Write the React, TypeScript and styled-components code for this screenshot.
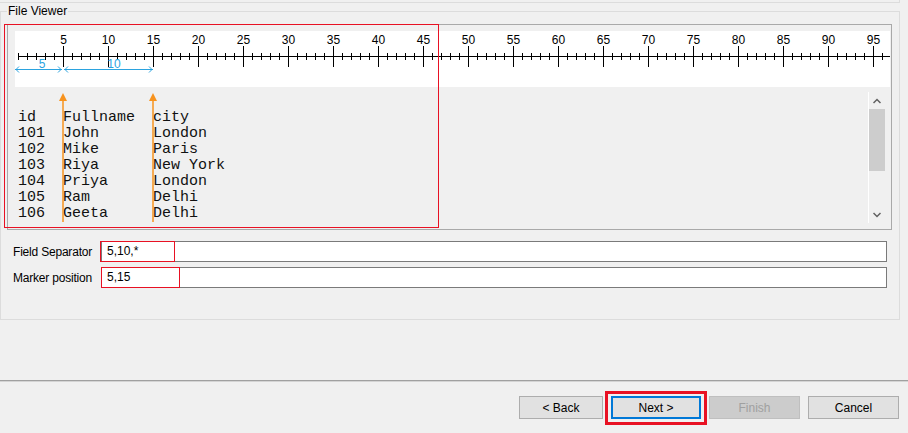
import React from "react";
import styled, { createGlobalStyle } from "styled-components";

const rows = [
  ["id", "Fullname", "city"],
  ["101", "John", "London"],
  ["102", "Mike", "Paris"],
  ["103", "Riya", "New York"],
  ["104", "Priya", "London"],
  ["105", "Ram", "Delhi"],
  ["106", "Geeta", "Delhi"],
];

// char width of the monospace view
const CH = 9;
const markers = [5, 15];

export default function App() {
  const ticks = Array.from({ length: 97 }, (_, k) => k);

  return (
    <Page>
      <GlobalStyle />
      <TopPanel />
      <Group>
        <Legend>File Viewer</Legend>
        <Viewer>
          <RulerWrap>
            <svg width="875" height="56" shapeRendering="crispEdges">
              <line x1="3" y1="25.5" x2="875" y2="25.5" stroke="#000" />
              {ticks.map((k) => {
                const x = 3.5 + CH * k;
                const major = k % 5 === 0 && k > 0;
                return (
                  <g key={k}>
                    <line
                      x1={x}
                      x2={x}
                      y1={major ? 15 : 22}
                      y2={major ? 36 : 29}
                      stroke="#000"
                      strokeWidth={major ? 1.4 : 1}
                    />
                    {major && (
                      <text
                        x={x}
                        y="13"
                        textAnchor="middle"
                        fontSize="12"
                        fontFamily="'Liberation Sans', Arial, sans-serif"
                        fill="#000"
                        shapeRendering="auto"
                      >
                        {k}
                      </text>
                    )}
                  </g>
                );
              })}
              <g stroke="#2ba3df" fill="none" shapeRendering="auto">
                <line x1="0" y1="38.5" x2="47" y2="38.5" />
                <polyline points="4,35.5 1,38.5 4,41.5" />
                <polyline points="43,35.5 46,38.5 43,41.5" />
                <line x1="49" y1="38.5" x2="138" y2="38.5" />
                <polyline points="53,35.5 50,38.5 53,41.5" />
                <polyline points="134,35.5 137,38.5 134,41.5" />
              </g>
              <g
                fill="#2ba3df"
                fontSize="12"
                fontFamily="'Liberation Sans', Arial, sans-serif"
                textAnchor="middle"
                shapeRendering="auto"
              >
                <text x="27" y="37">5</text>
                <text x="99" y="37">10</text>
              </g>
            </svg>
          </RulerWrap>
          <DataArea>
            <TextPane>
              {rows.map((r, i) => (
                <DataRow key={i}>
                  {r.map((c, j) => (
                    <span key={j}>{c}</span>
                  ))}
                </DataRow>
              ))}
              <MarkerLayer width="200" height="142">
                {markers.map((m) => {
                  const x = 10 + CH * m;
                  return (
                    <g key={m} fill="#f7931e" stroke="#f7931e">
                      <polygon points={`${x},6 ${x + 4},14 ${x - 4},14`} stroke="none" />
                      <line x1={x} y1="13" x2={x} y2="135" strokeWidth="1.5" />
                    </g>
                  );
                })}
              </MarkerLayer>
            </TextPane>
            <Scrollbar>
              <ScrollButton>
                <svg width="8" height="6">
                  <polyline points="0.5,5 4,1.5 7.5,5" fill="none" stroke="#606060" strokeWidth="1.5" />
                </svg>
              </ScrollButton>
              <Thumb />
              <Track />
              <ScrollButton>
                <svg width="8" height="6">
                  <polyline points="0.5,1 4,4.5 7.5,1" fill="none" stroke="#606060" strokeWidth="1.5" />
                </svg>
              </ScrollButton>
            </Scrollbar>
          </DataArea>
          <Highlight $left={-4} $top={-1} $width={435} $height={204} />
        </Viewer>
        <Fields>
          <FieldRow>
            <Label>Field Separator</Label>
            <InputWrap>
              <Input>5,10,*</Input>
              <Highlight $left={-1} $top={0} $width={75} $height={21} />
            </InputWrap>
          </FieldRow>
          <FieldRow>
            <Label>Marker position</Label>
            <InputWrap>
              <Input>5,15</Input>
              <Highlight $left={0} $top={0} $width={79} $height={21} />
            </InputWrap>
          </FieldRow>
        </Fields>
      </Group>
      <Footer>
        <Button $width={84}>&lt; Back</Button>
        <FocusWrap>
          <Button $width={90} $focused>
            Next &gt;
          </Button>
          <FocusMark />
        </FocusWrap>
        <Button $width={91} $disabled>
          Finish
        </Button>
        <Button $width={91}>Cancel</Button>
      </Footer>
    </Page>
  );
}

const GlobalStyle = createGlobalStyle`
  html, body {
    margin: 0;
    padding: 0;
    background: #f0f0f0;
  }
  * {
    box-sizing: border-box;
  }
`;

const Page = styled.div`
  width: 908px;
  height: 433px;
  display: flex;
  flex-direction: column;
  background: #f0f0f0;
  font-family: "Liberation Sans", Arial, sans-serif;
  font-size: 12px;
  color: #000;
  overflow: hidden;
`;

const TopPanel = styled.div`
  width: 900px;
  height: 3px;
  border-right: 1px solid #dcdcdc;
  border-bottom: 1px solid #dcdcdc;
  flex: none;
`;

const Group = styled.fieldset`
  width: 900px;
  margin: 1px 0 0 0;
  padding: 5px 7px 31px 6px;
  border: 1px solid #dcdcdc;
  min-width: 0;
  flex: none;
`;

const Legend = styled.legend`
  padding: 0 1px;
  font-size: 12px;
  line-height: 15px;
`;

const Viewer = styled.div`
  position: relative;
  height: 206px;
  border: 1px solid #a9a9a9;
  display: flex;
  flex-direction: column;
`;

const RulerWrap = styled.div`
  padding: 6px 1px 0 7px;
  height: 62px;
  & > svg {
    display: block;
    background: #fff;
  }
`;

const DataArea = styled.div`
  flex: 1;
  display: flex;
`;

const TextPane = styled.div`
  position: relative;
  flex: 1;
  padding: 23px 0 0 10px;
  font-family: "Liberation Mono", "Courier New", monospace;
  font-size: 15px;
  line-height: 16px;
  color: #111;
`;

const DataRow = styled.div`
  display: grid;
  grid-template-columns: 45px 90px auto;
  white-space: pre;
`;

const MarkerLayer = styled.svg`
  position: absolute;
  left: 0;
  top: 0;
`;

const Scrollbar = styled.div`
  width: 17px;
  height: 131px;
  margin: 5px 6px 0 0;
  border-left: 1px solid #fff;
  display: flex;
  flex-direction: column;
`;

const ScrollButton = styled.div`
  height: 17px;
  display: flex;
  align-items: center;
  justify-content: center;
  & > svg {
    display: block;
  }
`;

const Thumb = styled.div`
  height: 62px;
  background: #cdcdcd;
`;

const Track = styled.div`
  flex: 1;
`;

const Highlight = styled.div<{
  $left: number;
  $top: number;
  $width: number;
  $height: number;
}>`
  position: absolute;
  left: ${(p) => p.$left}px;
  top: ${(p) => p.$top}px;
  width: ${(p) => p.$width}px;
  height: ${(p) => p.$height}px;
  border: 1px solid #e81123;
  pointer-events: none;
`;

const Fields = styled.div`
  margin-top: 11px;
  display: flex;
  flex-direction: column;
  gap: 5px;
`;

const FieldRow = styled.div`
  display: grid;
  grid-template-columns: 88px 1fr;
  align-items: center;
  margin: 0 5px 0 6px;
`;

const Label = styled.div`
  white-space: nowrap;
  font-size: 12px;
  letter-spacing: -0.2px;
`;

const InputWrap = styled.div`
  position: relative;
`;

const Input = styled.div`
  height: 21px;
  background: #fff;
  border: 1px solid #7a7a7a;
  padding: 0 5px;
  line-height: 19px;
  font-size: 12px;
`;

const Footer = styled.div`
  margin-top: auto;
  height: 53px;
  border-top: 1px solid #a0a0a0;
  box-shadow: inset 0 1px 0 #d4d4d4;
  display: flex;
  justify-content: flex-end;
  align-items: flex-start;
  gap: 8px;
  padding: 15px 9px 0 0;
`;

const Button = styled.div<{
  $width: number;
  $focused?: boolean;
  $disabled?: boolean;
}>`
  width: ${(p) => p.$width}px;
  height: 23px;
  display: flex;
  align-items: center;
  justify-content: center;
  background: ${(p) => (p.$disabled ? "#cccccc" : "#e1e1e1")};
  border: ${(p) =>
    p.$focused
      ? "2px solid #0078d7"
      : p.$disabled
      ? "1px solid #bfbfbf"
      : "1px solid #adadad"};
  color: ${(p) => (p.$disabled ? "#a0a0a0" : "#000")};
  font-size: 12px;
`;

const FocusWrap = styled.div`
  position: relative;
`;

const FocusMark = styled.div`
  position: absolute;
  left: -6px;
  right: -6px;
  top: -5px;
  bottom: -6px;
  border: 3px solid #e81123;
`;
